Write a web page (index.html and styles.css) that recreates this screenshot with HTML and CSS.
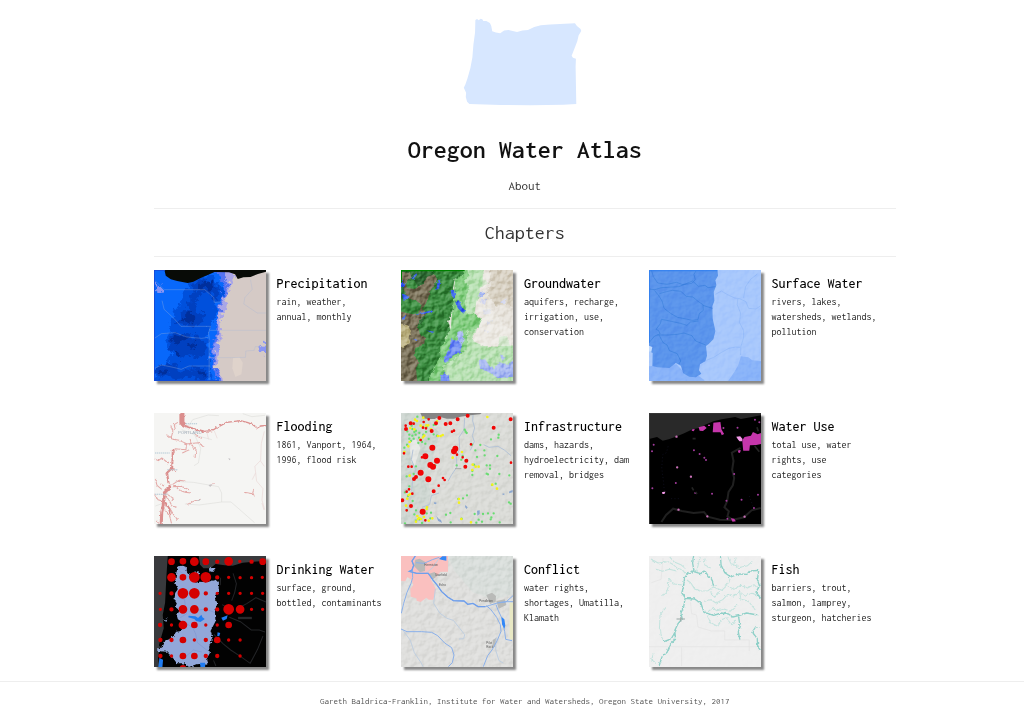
FILE: index.html
```html
<!DOCTYPE html>
<html lang="en">
<head>
<meta charset="utf-8">
<title>Oregon Water Atlas</title>
<meta name="viewport" content="width=device-width, initial-scale=1">
<link rel="stylesheet" href="styles.css">
</head>
<body>
<svg class="defs" width="0" height="0" aria-hidden="true">
  <defs>
    <filter id="relief" x="0" y="0" width="1" height="1" color-interpolation-filters="sRGB">
      <feTurbulence type="fractalNoise" baseFrequency="0.05" numOctaves="4" seed="7"/>
      <feDiffuseLighting surfaceScale="9" lighting-color="#fff"><feDistantLight azimuth="225" elevation="32"/></feDiffuseLighting>
    </filter>
    <filter id="rough" x="-0.1" y="-0.1" width="1.2" height="1.2" color-interpolation-filters="sRGB">
      <feTurbulence type="fractalNoise" baseFrequency="0.12" numOctaves="3" seed="3"/>
      <feDisplacementMap in="SourceGraphic" scale="9" xChannelSelector="R" yChannelSelector="G"/>
    </filter>
    <filter id="ragged" x="-0.1" y="-0.1" width="1.2" height="1.2" color-interpolation-filters="sRGB">
      <feTurbulence type="fractalNoise" baseFrequency="0.06" numOctaves="4" seed="5"/>
      <feDisplacementMap in="SourceGraphic" scale="34" xChannelSelector="R" yChannelSelector="G"/>
    </filter>
  </defs>
</svg>
<main class="page">
  <header class="masthead">
    <svg class="state" viewBox="215 54 378 266" role="img" aria-label="Outline of Oregon">
      <path fill="#d7e7ff" d="M254 60L259 57L264 61L270 56L275 58L278 63L287 63L298 69L302 78L305 94L316 98L329 100L341 92L354 90L367 93L380 96L396 92L413 90L432 81L452 76L480 74L555 70L561 78L572 87L574 93L566 107L562 124L553 148L545 168L549 174L558 177L557 201L559 314L520 316L420 318L330 317L236 314L229 307L225 293L226 280L219 265L224 254L230 237L239 205L245 173L248 135L253 98Z"/>
    </svg>
    <h1>Oregon Water Atlas</h1>
    <nav><a href="#about">About</a></nav>
  </header>
  <h2>Chapters</h2>
  <section class="chapters">
    <a class="chapter" href="#precipitation">
      <svg class="thumb" viewBox="13 22 333 333" preserveAspectRatio="none" aria-hidden="true">
        <path fill="#d5cac6" d="M0 0H360V360H0z"/>
        <g filter="url(#ragged)">
          <path fill="#a9a5e8" d="M-20 0H252L247 45L237 75L226 107L221 138L210 175L213 215L200 255L207 290L198 315L217 345V380H-20z"/>
          <path fill="#5573f2" d="M-20 0H222L226 50L235 66L222 105L210 125L213 145L203 175L205 225L188 257L190 285L200 318L212 380H-20z"/>
          <path fill="#0868fb" d="M-20 0H197L205 48L225 72L215 105L203 125L207 152L198 185L198 225L183 250L184 285L194 320L207 380H-20z"/>
          <path fill="#0050dc" d="M105 50L145 40L185 37L201 65L220 78L215 105L195 125L200 150L188 178L177 193L174 235L177 300L184 335L175 380H0L18 325L45 306L60 290L61 255L42 238L57 215L55 182L72 165L80 135L97 115L99 90L118 80Z"/>
          <path fill="#0040c0" d="M130 60L155 45L190 62L212 84L200 112L175 88L154 92L133 122L141 150L164 151L157 183L138 190L109 188L84 184L79 176L94 164L92 148L117 135L119 101L134 86ZM57 224L85 211L115 211L130 220L156 228L170 246L160 275L137 287L110 278L99 288L77 275L63 256ZM20 315L48 303L76 310L99 325L130 314L168 318L177 338L163 355L120 342L83 349L52 340L27 348Z"/>
          <path fill="#002f9c" d="M146 65L171 50L196 75L182 83L160 76L144 88ZM107 145L118 138L123 158L139 164L133 178L112 181L94 171L106 162ZM61 232L92 215L114 224L93 238L79 246ZM117 235L142 242L131 256L111 248ZM70 265L92 270L86 279ZM26 327L46 320L57 327L41 337ZM142 325L165 327L161 339L145 337Z"/>
          <path fill="#8995f4" d="M17 62L35 74L43 92L34 97L18 83ZM329 259L340 238L350 236V280L338 277L333 266ZM194 240L208 234L205 254L197 275L188 271Z"/>
        </g>
        <path fill="#dfd3cb" d="M248 286L267 284L277 300L273 335L255 343L246 317Z"/>
        <path fill="#080b07" d="M44 22H346V27L322 34L300 43L279 44L262 49L254 35L236 29L193 28L171 38L150 47L130 57L113 61L82 55L63 50L48 39Z"/>
        <g fill="none" stroke="#a8b6d5" stroke-width="2" opacity=".48">
          <path d="M17 55L43 81H164L191 105L192 119L218 117L223 135M37 114L43 140L72 167L93 191H181L175 211L177 225V354M13 228L35 213L76 210L110 223L155 227L174 224M180 203H346M15 317L36 307L70 314L94 320L117 310H180M175 285H240L285 284L286 265L311 263L314 252H333M300 51L305 80L283 105L280 124L320 151H346"/>
        </g>
        <path fill="none" stroke="#1648d5" stroke-width="3" d="M14 23V354H206M13 23H46"/>
      </svg>
      <div class="info"><h3>Precipitation</h3><p>rain, weather, annual, monthly</p></div>
    </a>
    <a class="chapter" href="#groundwater">
      <svg class="thumb" viewBox="14 22 336 333" preserveAspectRatio="none" aria-hidden="true">
        <path fill="#e7e3dc" d="M0 0H360V360H0z"/>
        <g filter="url(#rough)">
          <path fill="#d8d1c3" d="M275 5H370V145L330 124L299 130L281 107L272 79L285 70Z"/>
          <path fill="#b9e1b4" d="M205 5H260V50L275 62L250 76L249 105L239 122L235 150L246 176L240 205L229 220L232 235L262 250L305 252L309 222L332 220L340 246L370 254V370H125V210L194 185Z"/>
          <path fill="#85ce82" d="M180 5H213L216 41L203 54L219 70L205 118L211 154L237 155L257 171L246 193L229 208L213 203L210 262L192 275L157 302L137 310L145 324L135 370H60V300L138 245L163 200Z"/>
          <path fill="#3d8e42" d="M0 0H187L204 34L175 50L170 76L174 94L170 139L155 174L162 202L145 226L147 241L131 252L133 281L120 301L111 326L85 370H0z"/>
          <path fill="#2f6d35" d="M13 68L51 47L66 77L60 108L82 122L94 93L118 64L126 49L105 24H13ZM25 168L41 153L61 157L80 142L87 167L74 184L61 191L67 222L58 247L39 211Z"/>
          <path fill="#7a7159" d="M0 35L19 28L41 31L45 45L27 59L32 75L55 79L80 64L93 42L116 34L121 52L112 69L102 84L94 112L79 138L91 154L74 166L63 190L72 216L88 224L83 245L57 256L52 279L69 300L59 316L64 370H0V143L32 151L64 158L76 128L58 112L34 108Z"/>
          <path fill="#bdb384" d="M0 180L34 188L44 205L37 225L43 240L21 253L0 241Z"/>
          <path fill="#3d66ee" d="M13 47L27 66L20 78L13 69ZM16 91L33 99L37 108L21 111ZM44 46L61 31L55 49ZM123 60L132 49L129 77L119 85ZM163 82L172 82L178 99L174 108L165 98ZM177 116L188 113L195 131L208 145L199 151L184 136ZM50 158L105 143L111 147L86 153ZM13 169L30 157L24 170ZM88 203L115 207L108 211ZM50 228L67 232L61 236Z"/>
          <path fill="#738ff4" d="M165 229L180 234L195 225L196 249L191 272L171 277L152 298L144 302L142 285L154 269L161 250ZM133 342L144 331L157 336L162 370H133Z"/>
          <path fill="#aabaf2" d="M183 208L198 203L205 233L195 247L184 231ZM247 293L267 290L279 310L294 319L308 299L335 305L360 285V342L330 344L304 347L283 331L251 318ZM248 92L264 89L261 102L251 104ZM311 278L325 284L319 295Z"/>
          <path fill="#d0d4ed" d="M257 108L271 112L265 127L250 120ZM259 142L281 139L287 151L265 156ZM307 121L331 107L327 121ZM267 177L288 172L277 188ZM263 202L283 207L274 212Z"/>
        </g>
        <path fill="#f0eee9" opacity=".55" d="M259 24L285 30L274 60L258 82ZM239 113L266 126L300 153L318 183L344 201V250H265L231 238L244 202L257 170L239 150Z"/>
        <path class="shade" d="M14 22H350V355H14z" filter="url(#relief)" opacity=".6"/>
        <path fill="none" stroke="#008000" stroke-width="4" d="M14 24H205M15 24V60"/>
      </svg>
      <div class="info"><h3>Groundwater</h3><p>aquifers, recharge, irrigation, use, conservation</p></div>
    </a>
    <a class="chapter" href="#surface">
      <svg class="thumb" viewBox="18 22 334 333" preserveAspectRatio="none" aria-hidden="true">
        <path fill="#a8c8fc" d="M0 0H360V360H0z"/>
        <path fill="#8ab4f9" d="M292 281L314 284L326 293L352 295V355H254L272 329L284 308ZM18 311L100 305L119 325L150 343L166 340L183 352V355H18z"/>
        <path fill="#5b95ec" d="M18 22H222L224 39L216 53L219 68L211 88L213 114L207 131L208 168L216 205L210 230L196 244L188 250L191 279L186 296L170 305L167 323L174 333L158 344L138 342L120 332L113 309L98 301L79 316L43 314L28 310L29 271L18 265Z"/>
        <g fill="none" stroke="#397fdd" stroke-width="2" stroke-linejoin="round">
          <path d="M25 22L31 42L44 61L72 65L100 59L119 66L145 62L156 51L152 35L158 25M18 79L35 81L55 75L107 72L148 55L165 71L185 68L194 75L216 72M35 84L47 99L57 115L63 137L82 152L103 164L129 169L147 173L164 171L168 153L180 143L179 126L164 116L149 103L129 101L113 86L88 83L70 87L49 93M179 128L207 137M18 240L35 220L51 214L47 204L39 200L52 183L55 170L80 175L112 182L131 188L142 178L166 175M43 217L76 217L102 215L122 211L146 219L157 235L187 247M48 217L60 240L72 247L79 264L102 273L113 295L107 304"/>
        </g>
        <g fill="none" stroke="#8fb7f7" stroke-width="2">
          <path d="M216 95L234 85L254 97L274 106L288 108L307 117L315 137L337 139L350 130M341 34L321 50L306 72L300 105M283 109L281 126L291 151L288 180L300 203V225L292 252L291 277M189 293L211 284L233 270L256 257L277 253L290 254M29 340L43 345L50 322"/>
        </g>
        <path fill="#c3dcff" d="M18 249L28 253L25 267H18z"/>
        <path class="shade" d="M18 22H352V355H18z" filter="url(#relief)" opacity=".1"/>
        <path fill="none" stroke="#2f7ff0" stroke-width="3" d="M18 24H222M19 23V240"/>
      </svg>
      <div class="info"><h3>Surface Water</h3><p>rivers, lakes, watersheds, wetlands, pollution</p></div>
    </a>
    <a class="chapter" href="#flooding">
      <svg class="thumb" viewBox="13 20 333 333" preserveAspectRatio="none" aria-hidden="true">
        <path fill="#f5f5f3" d="M0 0H360V360H0z"/>
        <g fill="none" stroke="#dfdfdd" stroke-width="2">
          <path d="M95 70L144 89L185 100M134 86L152 126L145 170L132 178M75 225L130 228L205 241L214 260V287L147 296L105 293M214 287H242L266 308L312 349M60 241L42 290L17 299M110 68L128 40L174 26L206 28M277 22L304 31L343 27"/>
        </g>
        <g fill="none" stroke="#e3a8a6" stroke-width="3" stroke-linejoin="round" filter="url(#rough)">
          <path d="M50 85L67 98L88 102L110 112L108 130L76 127L69 150L67 185L48 201L55 223L62 240L44 262L41 291L35 317L34 350M63 57L69 75L64 95M84 48L73 55L77 73M120 99L124 115L138 130L135 155M108 113L146 109L159 121M97 140L119 130M55 170L36 155L26 163L15 158M62 184L79 194M64 237L87 222L106 224M68 241L94 240L117 250M73 237L88 251L105 258L123 260M45 269L57 280L67 300L80 302M40 280L60 306L72 326L83 340M42 306L60 330L65 351M36 249L22 237L17 218M32 233L43 239M49 262L71 276L66 285M15 265L25 280L35 283M20 342L27 351M124 111L130 126M135 87L155 96M112 294L135 283L151 279M180 238L190 231M281 258L306 262L310 248M308 261L311 271"/>
        </g>
        <g fill="none" stroke="#db8e8d" filter="url(#rough)">
          <path stroke-width="15" d="M96 10V49L104 58"/>
          <path stroke-width="6" d="M104 58L123 65L145 72L161 75"/>
          <path stroke-width="4" d="M161 75L185 73L204 62L229 48L253 45L270 43L292 49L307 55L320 65L330 59L356 57"/>
          <path stroke-width="9" d="M63 240L44 259L40 299L36 318L34 362"/>
          <path stroke-width="6" d="M69 130L67 185L52 199L56 230M42 281L58 308L63 325"/>
        </g>
        <g fill="none" stroke="#ead8d7" stroke-width="2"><path d="M170 76L175 99M192 73L201 96M341 75L332 112L330 162L313 180L318 224L337 247L334 281L342 310M329 163L341 180M315 200L305 220M334 290L340 311"/></g>
        <path fill="none" stroke="#b0c7d4" stroke-width="3" stroke-dasharray="4 2" d="M107 52H142M16 140H60M53 190H84M16 264H53"/>
        <text x="84" y="84" class="mapword">PORTLAND</text>
        <path fill="#c5c2c5" d="M234 155L241 158L237 162ZM175 236L187 234L180 242ZM137 284L153 278L147 284Z"/>
      </svg>
      <div class="info"><h3>Flooding</h3><p>1861, Vanport, 1964, 1996, flood risk</p></div>
    </a>
    <a class="chapter" href="#infrastructure">
      <svg class="thumb" viewBox="14 20 336 333" preserveAspectRatio="none" aria-hidden="true">
        <path fill="#dbdcd8" d="M0 0H360V360H0z"/>
        <path fill="#cfd7d2" d="M14 20H90L110 60L130 80L107 165L90 200L102 260L90 353H14z"/>
        <path fill="#e6e8e5" d="M38 107L59 99L72 125L55 179L45 167Z"/>
        <path class="shade" d="M14 20H350V353H14z" filter="url(#relief)" opacity=".28"/>
        <g fill="none" stroke="#b5c4d7" stroke-width="3"><path d="M230 26L229 44L235 65L228 88L234 106L222 132M205 35L203 70L188 93L190 127L180 151L182 182L166 205L155 225M262 115L278 123L305 120L324 131L344 148M50 130L45 160L58 190L49 220L46 255M128 260L105 268L100 294L77 303"/></g>
        <path fill="#8ba7d1" d="M114 287L121 289L119 294L113 292ZM207 296L214 303L211 308L206 302ZM242 313L250 312V323L243 328ZM120 329L127 337L134 341L137 350L125 343ZM316 263L324 261V267ZM339 255L349 251V258L338 261Z"/>
        <path fill="#858585" d="M72 20H256L251 24L221 27L193 31L173 37L151 37L129 31L115 38H93L79 35Z"/>
        <g fill="none" stroke-linecap="round">
          <path stroke="#69dc72" stroke-width="7" d="M63 31h0M52 51h0M46 58h0M33 75h0M39 85h0M48 88h0M39 97h0M52 97h0M58 85h0M59 73h0M69 80h0M68 94h0M81 85h0M89 77h0M97 98h0M77 107h0M87 112h0M66 110h0M32 115h0M24 124h0M48 68h0M54 77h0M91 61h0M112 84h0M122 88h0M44 104h0M205 70h0M208 76h0M211 80h0M307 85h0M284 99h0M306 94h0M227 115h0M237 132h0M252 116h0M264 132h0M265 147h0M303 149h0M242 152h0M199 149h0M195 160h0M233 175h0M271 177h0M281 177h0M281 187h0M228 194h0M271 202h0M275 204h0M309 203h0M339 207h0M228 206h0M298 232h0M287 236h0M212 267h0M200 276h0M186 278h0M338 288h0M343 292h0M292 321h0M285 333h0M275 321h0M283 339h0M260 323h0M235 323h0M247 340h0M240 349h0M257 346h0M310 348h0M196 337h0M162 320h0M163 348h0M149 325h0M91 321h0M104 319h0M39 240h0M52 203h0M59 180h0M31 210h0M26 258h0M35 269h0M49 284h0M59 312h0M32 312h0M54 324h0M59 343h0M69 339h0M77 350h0M102 336h0M26 351h0M181 177h0M117 177h0M118 55h0M112 56h0"/>
          <path stroke="#f2f21b" stroke-width="8" d="M56 40h0M62 44h0M81 34h0M42 65h0M54 69h0M73 58h0M81 62h0M90 57h0M96 57h0M104 69h0M125 89h0M133 89h0M139 86h0M72 100h0M80 93h0M36 120h0M24 137h0M84 88h0M40 107h0M122 45h0M273 32h0M169 154h0M197 137h0M229 175h0M238 181h0M247 181h0M228 191h0M302 247h0M288 235h0M188 278h0M188 289h0M92 303h0M91 308h0M29 298h0M42 263h0M37 266h0M33 277h0M40 208h0M63 329h0M69 335h0M83 332h0M74 338h0M97 343h0M65 338h0M59 346h0M108 336h0M224 348h0M195 338h0"/>
          <path stroke="#f10505" stroke-width="8" d="M28 58h0M52 52h0M82 47h0M80 64h0M89 66h0M97 39h0M73 101h0M23 141h0M77 153h0M167 76h0M173 73h0M224 114h0M344 169h0M199 153h0M182 145h0M36 181h0M46 181h0M140 215h0M145 221h0M127 238h0M38 249h0M31 256h0M48 262h0M31 312h0M87 342h0"/>
          <path stroke="#f10505" stroke-width="12" d="M43 51h0M29 68h0M129 35h0M119 51h0M106 74h0M148 53h0M162 51h0M184 39h0M214 28h0M292 64h0M343 39h0M210 163h0M207 181h0M53 218h0M59 212h0M112 255h0M18 282h0M44 299h0"/>
          <path stroke="#f10505" stroke-width="18" d="M108 124h0M87 150h0M122 163h0M102 176h0M110 181h0M73 199h0M96 219h0M79 316h0M177 127h0M173 135h0"/>
        </g>
        <path stroke="#a6a9a8" stroke-width="3" d="M176 187H195"/>
      </svg>
      <div class="info"><h3>Infrastructure</h3><p>dams, hazards, hydroelectricity, dam removal, bridges</p></div>
    </a>
    <a class="chapter" href="#use">
      <svg class="thumb" viewBox="18 20 334 333" preserveAspectRatio="none" aria-hidden="true">
        <path d="M0 0H360V360H0z"/>
        <path fill="#292929" d="M18 20H352V27L321 33L292 38L275 32L235 39L210 45L184 56L171 64L148 69L123 81L98 91L77 99L59 103L42 92L18 98z"/>
        <g fill="none" stroke="#202020" stroke-width="6"><path d="M291 125L265 139L270 164L266 190L272 215L268 237L255 257L251 285L243 303L256 315L252 330L269 341M55 347L69 326L90 307L116 314L151 320L182 317L193 331L229 340L266 341L301 333L324 312L351 305"/></g>
        <g fill="none" stroke="#15152c" stroke-width="2" stroke-dasharray="3 7"><path d="M75 120L70 139L59 145L56 185L61 224L64 258M84 277H110M317 269L330 305"/></g>
        <g fill="#c536ab">
          <path d="M210 49L231 47L234 69L242 83L235 87L231 78H208ZM166 63L183 58L190 65L179 74L169 73ZM148 68L155 69L151 75L145 73ZM328 77L342 84L352 80V113L338 116L319 117L317 133H299L296 102L303 92L322 88Z"/>
          <path d="M262 336L272 337L277 345L267 346ZM285 131L292 132L289 140L283 138ZM194 55h6v4h-6z"/>
        </g>
        <path fill="#f29ae7" d="M278 91L290 90L297 98L295 105H288L284 100ZM57 257L67 256L64 263H58Z"/>
        <g fill="none" stroke-linecap="round"><path stroke="#a23b9c" stroke-width="6" d="M32 115h0M27 135h0M152 132h0M169 143h0M183 154h0M188 161h0M98 230h0M156 260h0M206 262h0M272 203h0M249 283h0M294 280h0M331 305h0M252 337h0M28 246h0M343 265h0M347 48h0M334 40h0M282 64h0M240 65h0"/>
        <path stroke="#ca72b8" stroke-width="7" d="M102 183h0M143 211h0M106 310h0M192 330h0M303 331h0M100 91h0"/></g>
        <path stroke="#242424" stroke-width="5" d="M148 97H157M146 243L151 252M157 257L161 263M340 63L344 75M333 119L347 136"/>
        <path fill="none" stroke="#3b3b3b" stroke-width="3" d="M19 20V353M18 21H352"/>
      </svg>
      <div class="info"><h3>Water Use</h3><p>total use, water rights, use categories</p></div>
    </a>
    <a class="chapter" href="#drinking">
      <svg class="thumb" viewBox="13 20 333 333" preserveAspectRatio="none" aria-hidden="true">
        <path fill="#020202" d="M0 0H360V360H0z"/>
        <path fill="#393a3d" d="M13 20H54L50 79L48 119L46 160L39 197L42 237L28 286L29 303L25 326L29 353H13zM146 20H346V34L310 37L277 40L247 49L223 48L196 44L181 57L160 57L150 46Z"/>
        <g fill="none" stroke="#232427" stroke-width="3"><path d="M248 72L258 103L253 129L244 154M259 179L290 162L316 145L346 158M237 204L270 217L302 242L326 242L343 248M191 255L218 283L241 302L270 321L299 342L321 300L337 260M216 166L243 184M190 333L197 350M211 85L210 108"/></g>
        <path fill="#92a7d9" filter="url(#rough)" d="M84 51L99 49L111 54L110 65L126 87L137 100L149 97L169 99L196 91L206 101L205 126L194 139L201 163L194 186L196 216L181 245L187 265L177 292L179 312L168 331L172 345L161 349L141 344L117 353L103 342H81L70 327L51 307L22 305L23 299L40 289L47 273L65 267L79 247L93 246L100 233L94 216L84 210L81 199L89 183L75 172L81 163L74 151L76 131L84 120L75 99L79 74ZM40 211L53 207L50 218ZM132 67L146 66L148 75L134 80ZM179 57L196 55L191 67L181 67Z"/>
        <path fill="#1f7cf2" d="M116 199L136 201L144 206L154 196L157 204L164 209L151 218L138 215L133 209L115 204ZM213 205L232 198L229 209L218 214ZM150 340L165 340V353H151ZM29 326L40 331L38 353H26ZM202 249L210 251L207 261L201 260Z"/>
        <g fill="none" stroke="#6d87c8" stroke-width="2" opacity=".5"><path d="M89 66L109 79L132 84M84 145L104 151L109 194L91 205M105 219L128 235L137 254L142 280L163 297L174 305M108 321L130 302L155 308M118 186L166 179L195 190"/></g>
        <g fill="none" stroke="#d50000" stroke-linecap="round">
          <path stroke-width="10" d="M268 36h0M235 84h0M269 85h0M303 85h0M335 84h0M31 132h0M201 132h0M235 132h0M269 132h0M303 132h0M336 132h0M32 180h0M303 180h0M336 180h0M65 227h0M167 227h0M201 227h0M133 272h0M235 272h0M269 272h0M65 320h0M269 320h0"/>
          <path stroke-width="13" d="M201 37h0M303 37h0M201 84h0M65 132h0M167 132h0M65 180h0M167 180h0M201 180h0M31 227h0M32 272h0M65 272h0M167 272h0M32 320h0M167 320h0M201 320h0"/>
          <path stroke-width="20" d="M65 37h0M99 36h0M167 37h0M336 37h0M99 84h0M133 227h0M235 227h0M99 272h0M201 272h0M99 320h0M133 320h0M99 357h0"/>
          <path stroke-width="26" d="M133 37h0M235 36h0M65 84h0M99 180h0M133 180h0M269 180h0M99 227h0"/>
          <path stroke-width="32" d="M133 84h0M167 84h0M99 132h0M133 132h0M235 180h0"/>
        </g>
        <path stroke="#26282b" stroke-width="7" d="M263 206H304"/>
      </svg>
      <div class="info"><h3>Drinking Water</h3><p>surface, ground, bottled, contaminants</p></div>
    </a>
    <a class="chapter" href="#conflict">
      <svg class="thumb" viewBox="14 20 336 333" preserveAspectRatio="none" aria-hidden="true">
        <path fill="#dfdfdd" d="M0 0H360V360H0z"/>
        <path fill="#d9dedb" d="M155 20H350V135L292 151L229 129L174 64Z"/>
        <path class="shade" d="M14 20H350V353H14z" filter="url(#relief)" opacity=".34"/>
        <path fill="#fac0bf" d="M14 20H155V67H132L120 84L103 90L119 119L111 151H97L90 145L73 158L61 154L60 147L43 142L42 119L51 107L45 91L33 83L27 96L14 95z"/>
        <g fill="#b9bab8"><path d="M57 31L70 28L87 38L86 65L71 69L53 50ZM99 73L115 68L123 79L109 91ZM270 137L287 130L299 140L298 157L281 164ZM300 155L325 150L330 167L307 178ZM289 272L300 265L297 294L289 292Z"/></g>
        <path fill="#e8e8c4" d="M340 160H350V270H340z"/>
        <g fill="none" stroke="#c0cfe0" stroke-width="3"><path d="M117 119L112 162L130 191L152 207L171 213L191 238L205 256L202 268L188 269M21 244L42 273L54 310L74 340L80 352M300 264L298 302L308 334L321 341M89 72L111 53L126 30"/></g>
        <g fill="none" stroke="#8ab0ea" stroke-width="3" stroke-linejoin="round"><path d="M57 20L47 35L52 48L47 62L39 66L61 72L96 72L109 91L123 108L136 127L154 143L171 154L203 155L214 165L230 162L245 172L267 172L280 168L303 161L329 158L350 139M48 62L49 85L44 102L32 129L22 162L15 192M14 239L32 247L76 247L106 249L124 259L145 281L166 295L173 317L168 340L156 352M270 169L283 180L301 204L312 226L314 246L303 273L287 302L274 319L261 352M299 166L305 182L315 203L325 246L328 270L347 274M306 160L326 157H350M59 40L83 42L108 31L129 24"/></g>
        <path fill="none" stroke="#6f9fec" stroke-width="4" d="M57 20L47 35L52 48L47 62L39 66L61 72L96 72L109 91L123 108L136 127L154 143L171 154L203 155L214 165L230 162L245 172L267 172"/>
        <path fill="#3287f7" d="M128 29L138 21H150V34L135 31ZM316 203L324 210L327 229L324 238L317 225Z"/>
        <g class="place"><text x="84" y="50">Hermiston</text><text x="116" y="81">Stanfield</text><text x="128" y="110">Echo</text><text x="249" y="158">Pendleton</text><text x="270" y="284">Pilot</text><text x="270" y="296">Rock</text></g>
      </svg>
      <div class="info"><h3>Conflict</h3><p>water rights, shortages, Umatilla, Klamath</p></div>
    </a>
    <a class="chapter" href="#fish">
      <svg class="thumb" viewBox="18 20 334 333" preserveAspectRatio="none" aria-hidden="true">
        <path fill="#efefef" d="M0 0H360V360H0z"/>
        <path class="shade" d="M18 20H352V353H18z" filter="url(#relief)" opacity=".1"/>
        <path fill="none" stroke="#e2e3e3" stroke-width="2" d="M18 292H352M115 294V350M142 159L145 193L160 197L164 233L204 245H244V272H317V305M60 26L54 90L25 100"/>
        <g fill="none" stroke="#c3e3de" stroke-width="3" stroke-linejoin="round" filter="url(#rough)"><path d="M24 29L45 41L75 37L92 47L102 57L117 61L126 72M79 22L92 37L113 46L126 57M39 60L58 66L79 60L100 65M117 107L93 104L78 87L75 114L69 132L58 139M131 92L143 101L154 119L170 125L194 124L217 108M160 66L171 22M187 23L181 45L202 56M210 113L235 123L251 108L271 120L291 108L312 116L331 106L345 119M200 127L214 144L229 126M182 156L202 151L218 161L238 151L253 135L270 140L288 127L303 140L325 132L348 140M192 189L207 176L220 184L242 179L260 186L281 166M192 199L201 219L223 231L237 210L253 205M252 209L264 228L278 211M263 78L256 100L244 108M288 126L292 150L314 155L335 182M279 23L270 45L284 55L312 49L326 36M52 240L55 262L62 274M70 173L51 196L49 240M30 312L26 332L38 340M253 22L262 43L282 48"/></g>
        <g fill="none" stroke="#8fd0c8" stroke-width="4" stroke-linejoin="round" filter="url(#rough)"><path d="M151 20L148 41L152 64L134 72L124 86L122 106L116 131L126 145L121 174L113 192L117 207L104 224L95 243L97 270L82 284L72 309L57 322L48 350M151 67L172 73L185 65L194 79L205 90L211 112M124 147L154 149L173 162L182 189L211 198L233 191L255 194L268 203L288 198L309 191L341 197M231 20L233 48L244 70L262 83L286 74L310 75L318 65L346 63M345 65L341 90L347 109M350 106L337 128L351 147M324 251L336 233L349 232M328 251L341 268L342 292L350 302M285 202L290 232L284 246L289 271M62 277L84 269L99 242"/></g>
        <path stroke="#97a5a3" stroke-width="3" d="M100 209H125M113 202V217"/>
      </svg>
      <div class="info"><h3>Fish</h3><p>barriers, trout, salmon, lamprey, sturgeon, hatcheries</p></div>
    </a>
  </section>
</main>
<footer class="footer">Gareth Baldrica-Franklin, Institute for Water and Watersheds, Oregon State University, 2017</footer>
</body>
</html>
```
FILE: styles.css
```css
* {
  box-sizing: border-box;
}

body {
  margin: 0;
  background: #fff;
  color: #111;
  font-family: Inconsolata, "DejaVu Sans Mono", monospace;
}

h1, h2, h3, p {
  margin: 0;
  font-weight: 400;
}

a {
  color: inherit;
  text-decoration: none;
}

.defs {
  position: absolute;
}

.page {
  margin: 0 12.5% 0 15%;
}

.masthead {
  display: flex;
  flex-direction: column;
  align-items: center;
  padding: 18px 0 12px;
  border-bottom: 1px solid #eee;
}

.state {
  width: 126px;
  height: 88px;
}

h1 {
  margin-top: 28px;
  font-size: 26px;
  font-weight: 600;
  line-height: 32px;
}

nav {
  margin-top: 10px;
  color: #333;
  font-size: 13px;
  line-height: 20px;
}

h2 {
  border-bottom: 1px solid #eee;
  color: #333;
  font-size: 20px;
  line-height: 47px;
  text-align: center;
}

.chapters {
  display: grid;
  grid-template-columns: repeat(3, 1fr);
  row-gap: 32px;
  padding: 13px 0 14px;
}

.chapter {
  display: flex;
  align-items: flex-start;
  gap: 11px;
}

.thumb {
  flex: none;
  width: 112px;
  height: 111px;
  box-shadow: 3px 3px 2px #888;
}

.shade {
  mix-blend-mode: soft-light;
}

.info {
  flex: 1;
  min-width: 0;
  padding: 4px 16px 0 0;
}

h3 {
  color: #000;
  font-size: 14px;
  font-weight: 500;
  line-height: 20px;
}

p {
  color: #222;
  font-size: 10px;
  line-height: 15px;
}

.mapword {
  fill: #a1adb8;
  font: 13px "Liberation Sans", sans-serif;
}

.place {
  fill: #555;
  font: 9px "Liberation Sans", sans-serif;
}

.footer {
  padding: 11px 12.5% 0 15%;
  border-top: 1px solid #eee;
  color: #555;
  font-size: 9px;
  line-height: 16px;
  text-align: center;
}
```
